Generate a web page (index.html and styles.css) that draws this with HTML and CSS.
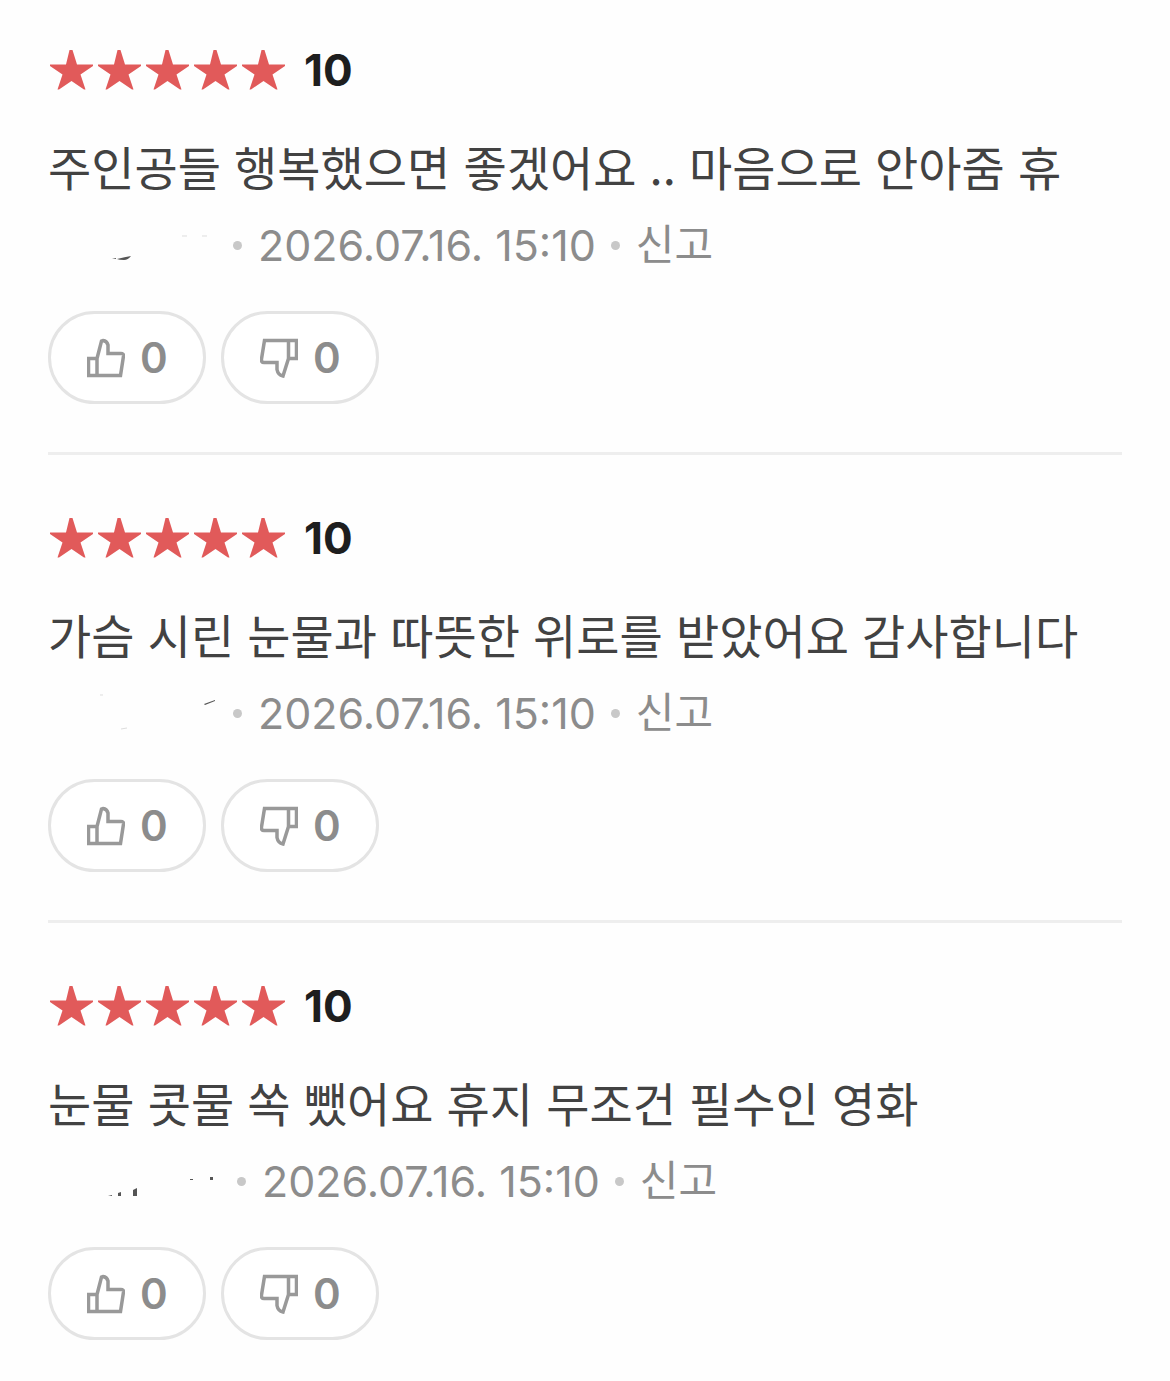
FILE: index.html
```html
<!DOCTYPE html>
<html lang="ko">
<head>
    <meta charset="UTF-8">
    <meta name="viewport" content="width=device-width, initial-scale=1.0">
    <title>관람평</title>
    <link rel="stylesheet" href="styles.css">
</head>
<body>
    <svg class="sprite" aria-hidden="true">
        <symbol id="stars" viewBox="0 0 240 44">
            <path id="star" d="M21.500 2H24.500L29 16.500H45V18L32.500 26.500L37.500 41.500H36L23.500 33L11 41.500H9.500L14.500 26.500L2 18V16.500H18Z"/>
            <use href="#star" x="48"/>
            <use href="#star" x="96"/>
            <use href="#star" x="144"/>
            <use href="#star" x="192"/>
        </symbol>
        <symbol id="thumb-up" viewBox="0 0 38 40">
            <path d="M1.500 20.500H10V37.500H1.500ZM10 37.500H33.500L36.500 18Q36.800 15.500 34 15.500H21V7Q20 3 16 2.500L14.500 3L10 20.500"/>
        </symbol>
        <symbol id="thumb-down" viewBox="0 0 38 40">
            <path d="M28.500 2.500H36.500V20.500H28.500ZM28.500 2.500H4.500L1.500 21Q1 24.500 4 24.500H17V31.500Q18 37 23 38L28.500 20.500"/>
        </symbol>
    </svg>

    <ul class="review-list">
        <li class="review">
            <div class="score">
                <svg class="stars" aria-hidden="true"><use href="#stars"/></svg>
                <strong class="score-num">10</strong>
            </div>
            <p class="comment">주인공들 행복했으면 좋겠어요 .. 마음으로 안아줌 휴</p>
            <div class="meta">
                <svg class="writer" width="170" height="50" viewBox="0 0 170 50" aria-hidden="true">
                    <path d="M64 39L68 38V39ZM69 39Q77 37 83 36Q80 40 76 40Q71 40 69 39Z" fill="#555"/>
                    <path d="M134 16H139M154 16H159" stroke="#ddd"/>
                </svg>
                <span class="date">2026.07.16. 15:10</span>
                <a class="report" href="#">신고</a>
            </div>
            <div class="votes">
                <button class="vote" type="button" aria-label="공감 0"><svg class="icon"><use href="#thumb-up"/></svg>0</button>
                <button class="vote" type="button" aria-label="비공감 0"><svg class="icon"><use href="#thumb-down"/></svg>0</button>
            </div>
        </li>
        <li class="review">
            <div class="score">
                <svg class="stars" aria-hidden="true"><use href="#stars"/></svg>
                <strong class="score-num">10</strong>
            </div>
            <p class="comment">가슴 시린 눈물과 따뜻한 위로를 받았어요 감사합니다</p>
            <div class="meta">
                <svg class="writer" width="170" height="50" viewBox="0 0 170 50" aria-hidden="true">
                    <path d="M156 16L167 12V13L157 17Z" fill="#555"/>
                    <path d="M52 7H55M73 41L79 40" stroke="#ddd"/>
                </svg>
                <span class="date">2026.07.16. 15:10</span>
                <a class="report" href="#">신고</a>
            </div>
            <div class="votes">
                <button class="vote" type="button" aria-label="공감 0"><svg class="icon"><use href="#thumb-up"/></svg>0</button>
                <button class="vote" type="button" aria-label="비공감 0"><svg class="icon"><use href="#thumb-down"/></svg>0</button>
            </div>
        </li>
        <li class="review">
            <div class="score">
                <svg class="stars" aria-hidden="true"><use href="#stars"/></svg>
                <strong class="score-num">10</strong>
            </div>
            <p class="comment">눈물 콧물 쏙 뺐어요 휴지 무조건 필수인 영화</p>
            <div class="meta">
                <svg class="writer" width="174" height="50" viewBox="0 0 174 50" aria-hidden="true">
                    <path d="M60 40L64 39V40ZM70 37L73 36V40H70ZM85 34L89 32V40H85ZM142 23H145V24H142ZM162 21H165V24H162Z" fill="#555"/>
                </svg>
                <span class="date">2026.07.16. 15:10</span>
                <a class="report" href="#">신고</a>
            </div>
            <div class="votes">
                <button class="vote" type="button" aria-label="공감 0"><svg class="icon"><use href="#thumb-up"/></svg>0</button>
                <button class="vote" type="button" aria-label="비공감 0"><svg class="icon"><use href="#thumb-down"/></svg>0</button>
            </div>
        </li>
    </ul>
</body>
</html>
```

FILE: styles.css
```css
* {
    box-sizing: border-box;
}

body {
    margin: 0;
    background: #fefefe;
    color: #1e1e1e;
    font-family: Inter, "Noto Sans CJK KR", sans-serif;
}

.sprite {
    position: absolute;
    width: 0;
    height: 0;
}

.review-list {
    margin: 0;
    padding: 0 48px;
    list-style: none;
}

.review {
    padding: 61px 0 48px;
    border-bottom: 3px solid #eee;
}

.review:first-child {
    padding-top: 48px;
}

.review:last-child {
    padding-bottom: 40px;
    border-bottom: none;
}

.score {
    display: flex;
    align-items: center;
    gap: 16px;
    height: 44px;
}

.stars {
    width: 240px;
    height: 44px;
    fill: #e15a5a;
}

.score-num {
    font-size: 44px;
    font-weight: 700;
    line-height: 44px;
}

.comment {
    margin: 44px 0 24px;
    color: #424242;
    font-family: "Noto Sans CJK KR", sans-serif;
    font-size: 47px;
    line-height: 60px;
}

.meta {
    display: flex;
    align-items: center;
    height: 50px;
    color: #8c8c8c;
    font-size: 43px;
    line-height: 50px;
}

.date,
.report {
    display: flex;
    align-items: center;
}

.date::before,
.report::before {
    content: "";
    width: 9px;
    height: 9px;
    margin: 0 16px 0 15px;
    border-radius: 50%;
    background: #c8c8c8;
}

.report {
    color: inherit;
    font-size: 42px;
    text-decoration: none;
}

.votes {
    display: flex;
    gap: 15px;
    margin-top: 41px;
}

.vote {
    display: flex;
    align-items: center;
    gap: 15px;
    min-width: 158px;
    height: 93px;
    padding: 0 32px 0 36px;
    border: 3px solid #e4e4e4;
    border-radius: 47px;
    background: #fff;
    color: #8c8c8c;
    font-family: inherit;
    font-size: 42px;
    font-weight: 600;
    cursor: pointer;
}

.icon {
    width: 38px;
    height: 40px;
    fill: none;
    stroke: #999;
    stroke-width: 3.5;
}
```
